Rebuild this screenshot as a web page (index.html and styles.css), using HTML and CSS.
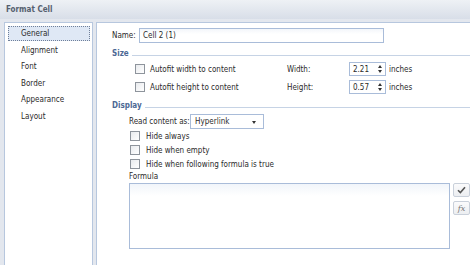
FILE: index.html
```html
<!DOCTYPE html>
<html lang="en">
<head>
  <meta charset="UTF-8">
  <title>Format Cell</title>
  <link rel="stylesheet" href="styles.css">
</head>
<body>
  <div class="dialog">
      <div class="titlebar">Format Cell</div>
      <div class="dialog-body">
          <ul class="nav">
              <li class="selected">General</li>
              <li>Alignment</li>
              <li>Font</li>
              <li>Border</li>
              <li>Appearance</li>
              <li>Layout</li>
          </ul>
          <div class="panel">
              <div class="name-row">
                  <span class="name-label">Name:</span>
                  <div class="textbox name-box">Cell 2 (1)</div>
              </div>

              <div class="section-head"><span>Size</span><div class="rule"></div></div>
              <div class="size-row">
                  <label class="check size-check"><span class="box"></span>Autofit width to content</label>
                  <span class="dim-label">Width:</span>
                  <div class="textbox spin">2.21<span class="spin-arrows"><i class="up"></i><i class="down"></i></span></div>
                  <span class="unit">inches</span>
              </div>
              <div class="size-row">
                  <label class="check size-check"><span class="box"></span>Autofit height to content</label>
                  <span class="dim-label">Height:</span>
                  <div class="textbox spin">0.57<span class="spin-arrows"><i class="up"></i><i class="down"></i></span></div>
                  <span class="unit">inches</span>
              </div>

              <div class="section-head"><span>Display</span><div class="rule"></div></div>
              <div class="display">
                  <div class="read-row">
                      <span class="read-label">Read content as:</span>
                      <div class="textbox select">Hyperlink<i class="caret"></i></div>
                  </div>
                  <label class="check row-check"><span class="box"></span>Hide always</label>
                  <label class="check row-check"><span class="box"></span>Hide when empty</label>
                  <label class="check row-check"><span class="box"></span>Hide when following formula is true</label>
                  <div class="formula-label">Formula</div>
                  <div class="formula-row">
                      <div class="formula-box"></div>
                      <div class="formula-tools">
                          <button class="tool">
                              <svg width="9" height="8" viewBox="0 0 9 8"><path d="M1 4.2 L3.4 6.6 L8 1.2" fill="none" stroke="#555" stroke-width="1.6"/></svg>
                          </button>
                          <button class="tool fx">fx</button>
                      </div>
                  </div>
              </div>
          </div>
      </div>
  </div>
</body>
</html>
```

FILE: styles.css
```css
body {
    margin: 0;
    font-family: "DejaVu Sans Condensed", "DejaVu Sans", sans-serif;
    font-size: 8px;
    color: #2a2a2a;
    background: #e3e7ee;
}
.dialog {
    width: 470px;
    height: 265px;
    overflow: hidden;
}
.titlebar {
    height: 19px;
    line-height: 19px;
    padding-left: 6px;
    font-weight: bold;
    color: #55606f;
    background: linear-gradient(#eef1f5, #d8dee8);
}
.dialog-body {
    display: flex;
    gap: 3px;
    padding: 3px 0 0 4px;
    height: 243px;
}
.nav {
    list-style: none;
    margin: 0;
    padding: 3px 2px 0 3px;
    width: 83px;
    background: white;
    border: 1px solid #b7c7de;
    border-bottom: none;
}
.nav li {
    height: 13px;
    line-height: 13px;
    padding-left: 12px;
    margin-bottom: 1.6px;
    border: 1px solid transparent;
}
.nav li.selected {
    background: #dfe8f5;
    border: 1px dotted #6f7f99;
}
.panel {
    flex: 1;
    background: white;
    border: 1px solid #b7c7de;
    border-right: none;
    border-bottom: none;
    padding: 5px 0 0 15px;
}
.textbox {
    border: 1px solid #a9bcd9;
    background: white;
    box-sizing: border-box;
    padding-left: 3px;
    display: flex;
    align-items: center;
    position: relative;
}
.name-row {
    display: flex;
    align-items: center;
    height: 15px;
}
.name-label {
    width: 27px;
}
.name-box {
    width: 245px;
    height: 15px;
    background: linear-gradient(#f3f6fa, white 40%);
}
.section-head {
    display: flex;
    align-items: center;
    height: 12px;
    margin-top: 4px;
    font-weight: bold;
    color: #4c6894;
}
.section-head .rule {
    flex: 1;
    margin: 5px 0 0 3px;
    border-top: 1px solid #c6d3e5;
}
.size-row {
    display: flex;
    align-items: center;
    height: 14px;
    margin: 3px 0 4px 23px;
}
.size-row + .section-head {
    margin-top: 5px;
}
.check {
    display: flex;
    align-items: center;
}
.box {
    width: 8px;
    height: 8px;
    border: 1px solid #8e949c;
    background: linear-gradient(135deg, #e9ebee, white);
    margin-right: 5px;
}
.size-check {
    width: 152px;
}
.dim-label {
    width: 62px;
}
.spin {
    width: 37px;
    height: 14px;
}
.spin-arrows {
    position: absolute;
    right: 3px;
    top: 2px;
    display: flex;
    flex-direction: column;
    gap: 2px;
}
.spin-arrows i, .caret {
    width: 0;
    height: 0;
    border-left: 2px solid transparent;
    border-right: 2px solid transparent;
}
.spin-arrows .up {
    border-bottom: 3px solid #333;
}
.spin-arrows .down {
    border-top: 3px solid #333;
}
.unit {
    margin-left: 3px;
}
.display {
    margin-left: 17px;
}
.read-row {
    display: flex;
    align-items: center;
    height: 15px;
    margin-top: 3px;
}
.read-label {
    width: 61px;
}
.select {
    width: 74px;
    height: 15px;
    padding-left: 4px;
}
.caret {
    position: absolute;
    right: 7px;
    top: 6px;
    border-top: 3px solid #333;
}
.row-check {
    height: 14px;
    margin-left: 1px;
}
.row-check .box {
    margin-right: 6px;
}
.formula-label {
    height: 12px;
    line-height: 12px;
}
.formula-row {
    display: flex;
    gap: 3px;
}
.formula-box {
    width: 321px;
    height: 66px;
    box-sizing: border-box;
    border: 1px solid #a9bcd9;
    background: linear-gradient(#f1f5fa, white 12px);
}
.formula-tools {
    display: flex;
    flex-direction: column;
    gap: 4px;
}
.tool {
    width: 17px;
    height: 14px;
    padding: 0;
    border: 1px solid #c9d0da;
    border-radius: 2px;
    background: linear-gradient(#fbfbfc, #eceef1);
    display: flex;
    align-items: center;
    justify-content: center;
}
.tool.fx {
    font-family: "DejaVu Serif", "Liberation Serif", serif;
    font-style: italic;
    font-size: 8px;
    color: #777;
}
```
